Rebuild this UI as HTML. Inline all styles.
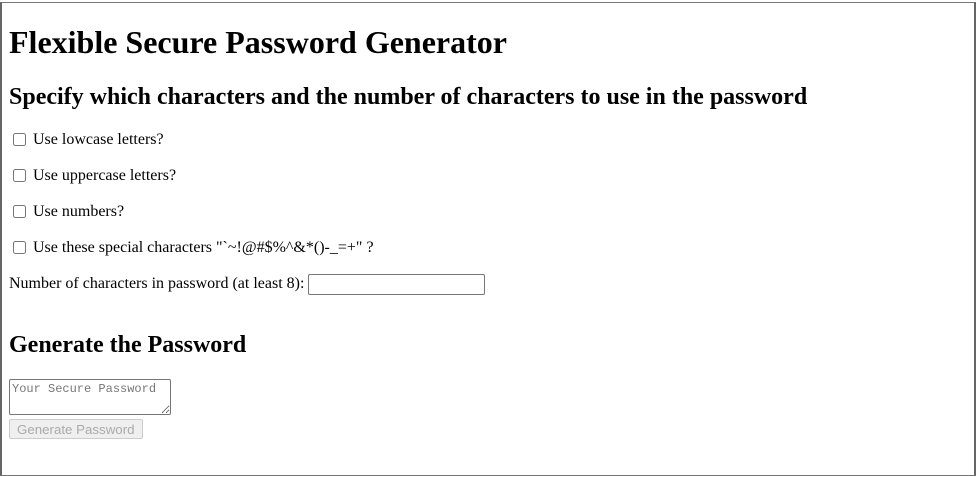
<!DOCTYPE html>
<html><head><style>
html,body{margin:0;padding:0;background:#fff;}
#frame{position:absolute;left:0;top:2px;width:972px;height:472px;border:1px solid #777;border-left:2px solid #666;border-right:2px solid #666;box-sizing:content-box;overflow:hidden;}
#in{margin:0 7px;font-family:"Liberation Serif",serif;font-size:16px;color:#000;}
h1{font-size:32px;margin:21px 0 0 0;line-height:37px;}
h2{font-size:24px;margin:22px 0 19px;line-height:28px;}
p{margin:16px 0;line-height:20px;}
input[type=checkbox]{width:13px;height:13px;margin:3px 3px 3px 4px;vertical-align:-2px;}
.num{width:171px;height:17px;border:1px solid #767676;border-radius:2px;padding:1px 2px;vertical-align:middle;}
textarea{width:156px;height:30px;font-family:"Liberation Mono",monospace;font-size:12px;border:1px solid #767676;border-radius:2px;padding:2px;margin:0;display:block;resize:both;overflow:hidden;white-space:nowrap;}
textarea::placeholder{color:#777;white-space:nowrap;}
button{margin-top:4px;font-family:"Liberation Sans",sans-serif;font-size:13.3px;color:#aaa;background:#efefef;border:1px solid #ccc;border-radius:2px;padding:1px 7px;height:20px;}
</style></head><body><div id="frame"><div id="in">
<h1>Flexible Secure Password Generator</h1>
<h2>Specify which characters and the number of characters to use in the password</h2>
<p><input type="checkbox"> Use lowcase letters?</p>
<p><input type="checkbox"> Use uppercase letters?</p>
<p><input type="checkbox"> Use numbers?</p>
<p><input type="checkbox"> Use these special characters "`~!@#$%^&amp;*()-_=+" ?</p>
<div>Number of characters in password (at least 8): <input class="num" type="text"></div>
<h2 style="margin-top:36px;margin-bottom:20px">Generate the Password</h2>
<textarea placeholder="Your Secure Password"></textarea>
<button disabled>Generate Password</button>
</div></div></body></html>
